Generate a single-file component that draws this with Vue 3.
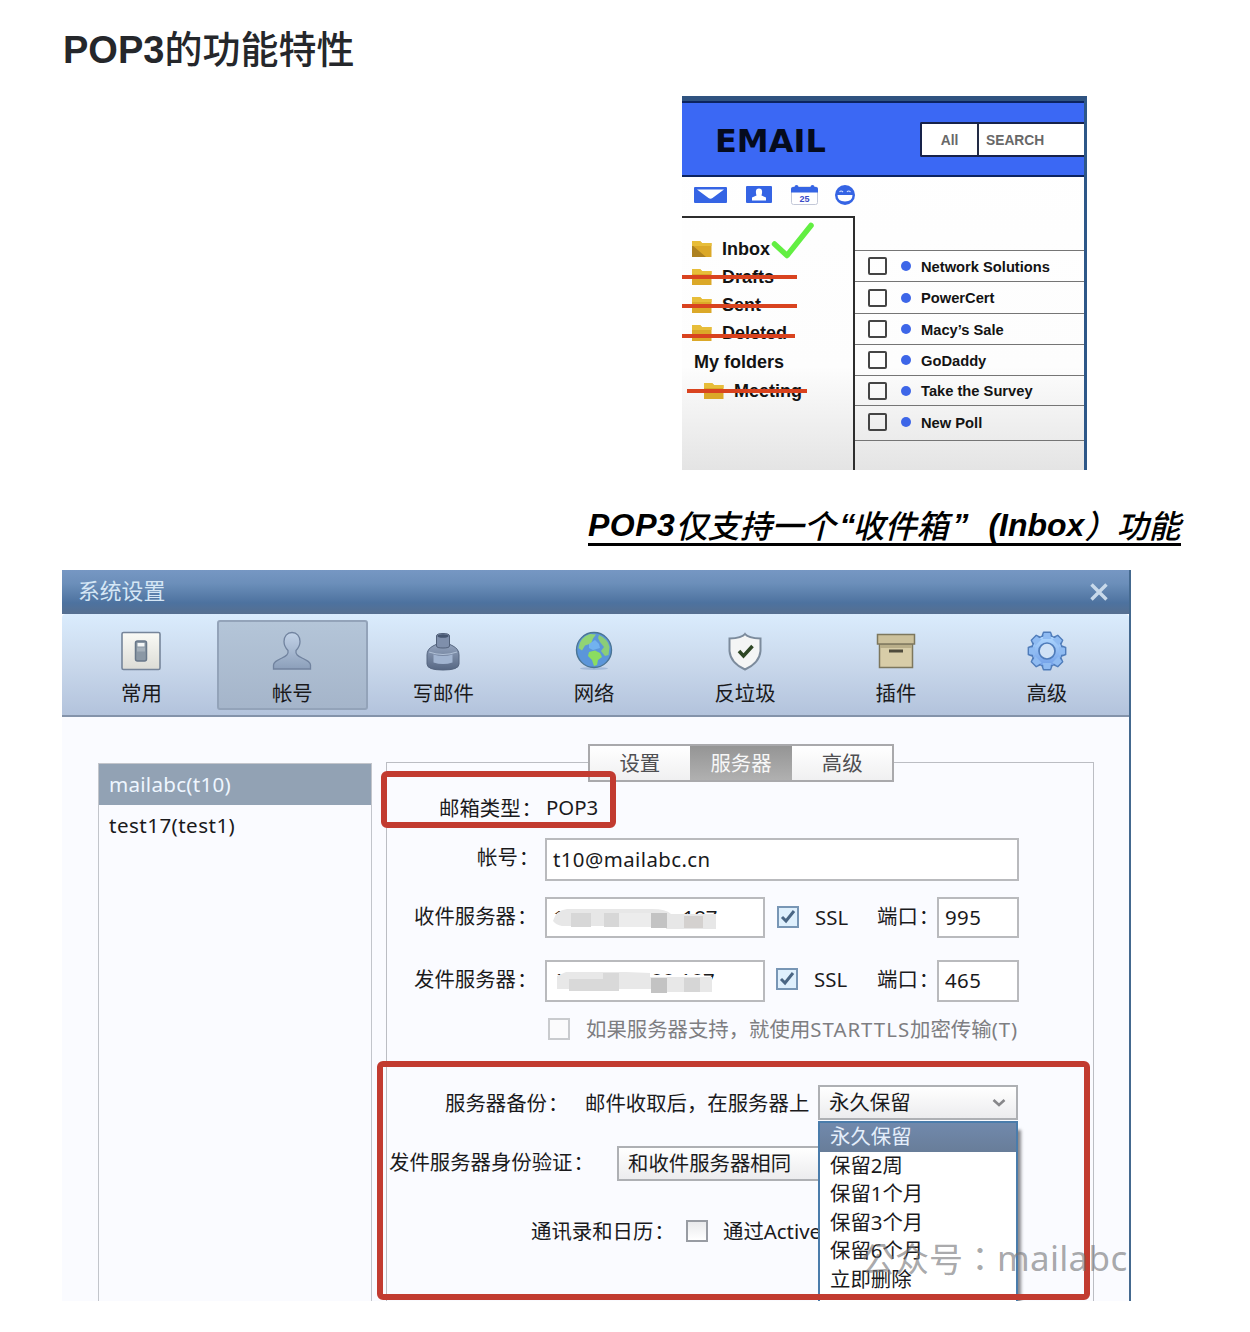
<script setup>
const folders = [
  { name: 'Drafts', strike: 115, dy: 0 },
  { name: 'Sent', strike: 115, dy: 1 },
  { name: 'Deleted', strike: 113, dy: 3 },
]
const mails = [
  { name: 'Network Solutions', h: 31 },
  { name: 'PowerCert', h: 32 },
  { name: 'Macy’s Sale', h: 31 },
  { name: 'GoDaddy', h: 31 },
  { name: 'Take the Survey', h: 30 },
  { name: 'New Poll', h: 35 },
]
const tools = ['常用', '帐号', '写邮件', '网络', '反垃圾', '插件', '高级']
const options = ['永久保留', '保留2周', '保留1个月', '保留3个月', '保留6个月', '立即删除']
const teeth = [0, 45, 90, 135, 180, 225, 270, 315]
</script>

<template>
  <main class="article">
    <h1><b>POP3</b><span>的功能特性</span></h1>

    <section class="mail">
      <div class="mail-head">
        <span class="logo">EMAIL</span>
        <div class="search"><span class="all">All</span><span class="term">SEARCH</span></div>
      </div>
      <div class="mail-icons">
        <svg class="i1" width="33" height="16" viewBox="0 0 33 16"><rect width="33" height="16" rx="1" fill="#3564e4" /><path d="M3 2.500h27L18.500 11q-2 1.500-4 0z" fill="#fff" /></svg>
        <svg class="i2" width="26" height="17" viewBox="0 0 26 17"><rect width="26" height="17" rx="1" fill="#3564e4" /><path d="M6 14.500v-3l4.500-2q-2-7 2.500-7t2.500 7l4.500 2v3z" fill="#fff" /></svg>
        <svg class="i3" width="27" height="20" viewBox="0 0 27 20"><rect x=".5" y="2" width="26" height="17.500" rx="2" fill="#fff" stroke="#c3c8d8" /><path d="M0 7.500V4q0-2 2-2h23q2 0 2 2v3.500z" fill="#3564e4" /><circle cx="5.500" cy="2" r="2" fill="#3564e4" /><circle cx="21.500" cy="2" r="2" fill="#3564e4" /><text x="13.500" y="17" text-anchor="middle" font-size="9" font-weight="700" fill="#3a4bc8">25</text></svg>
        <svg class="i4" width="20" height="20" viewBox="0 0 20 20"><circle cx="10" cy="10" r="10" fill="#3564e4" /><path d="M2.500 10h15q0 6.500-7.500 6.500T2.500 10z" fill="#fff" /><path d="M4.500 7q1.500-2 3.500 0M12 7q1.500-2 3.500 0" fill="none" stroke="#cfdcff" stroke-width="1.200" /></svg>
      </div>
      <div class="mail-body">
        <aside class="side">
          <div class="folder">
            <i class="fold"><svg width="20" height="16" viewBox="0 0 20 16"><path d="M0 0h8l2 2h9.500v14H0z" fill="#dba828" /><path d="M0 4v12h14z" fill="#ad8120" /><path d="M0 0h8l2 2h9.500v3H0z" fill="#e7bd39" /></svg></i>Inbox
            <svg class="tick" width="44" height="38" viewBox="0 0 44 38"><path d="M3.500 22 16 33.500 40 3.500" fill="none" stroke="#62ef42" stroke-width="5.500" stroke-linecap="round" stroke-linejoin="round" /></svg>
          </div>
          <div v-for="f in folders" :key="f.name" class="folder">
            <i class="fold"><svg width="20" height="16" viewBox="0 0 20 16"><path d="M0 0h8l2 2h9.500v14H0z" fill="#dba828" /><path d="M0 0h8l2 2h9.500v3H0z" fill="#e7bd39" /></svg></i>{{ f.name }}
            <span class="strike" :style="{ width: f.strike + 'px', marginTop: f.dy + 'px' }"></span>
          </div>
          <div class="own">My folders</div>
          <div class="folder sub">
            <i class="fold"><svg width="20" height="16" viewBox="0 0 20 16"><path d="M0 0h8l2 2h9.500v14H0z" fill="#dba828" /><path d="M0 0h8l2 2h9.500v3H0z" fill="#e7bd39" /></svg></i>Meeting
            <span class="strike long"></span>
          </div>
        </aside>
        <div class="list">
          <div v-for="m in mails" :key="m.name" class="item" :style="{ height: m.h + 'px' }"><i class="cb"></i><i class="dot"></i><span>{{ m.name }}</span></div>
          <div class="item end"></div>
        </div>
      </div>
    </section>

    <p class="caption"><em class="pop">POP3</em><span class="cj">仅支持一个</span><em class="lq">“</em><span class="cj">收件箱</span><em class="rq">”</em><em class="open">(Inbox</em><span class="cj close">）功能</span></p>

    <section class="dialog">
      <header class="bar"><span>系统设置</span><svg width="18" height="18" viewBox="0 0 18 18"><path d="M1.500 1.500l15 15M16.500 1.500l-15 15" stroke="#c8d9ea" stroke-width="3.400" /></svg></header>
      <nav class="tools">
        <div v-for="(t, i) in tools" :key="t" class="tool" :class="{ on: i === 1 }">
          <svg width="40" height="40" viewBox="0 0 40 40">
            <defs>
              <linearGradient id="paper" x1="0" y1="0" x2="0" y2="1"><stop offset="0" stop-color="#fafaf6" /><stop offset="1" stop-color="#dcdcd6" /></linearGradient>
              <linearGradient id="steel" x1="0" y1="0" x2="0" y2="1"><stop offset="0" stop-color="#c3d3e8" /><stop offset="1" stop-color="#8c9fba" /></linearGradient>
              <linearGradient id="ink" x1="0" y1="0" x2="0" y2="1"><stop offset="0" stop-color="#93a3bd" /><stop offset="1" stop-color="#566783" /></linearGradient>
              <linearGradient id="sky" x1="0" y1="0" x2="0" y2="1"><stop offset="0" stop-color="#b0d8ff" /><stop offset="1" stop-color="#719fe8" /></linearGradient>
            </defs>
            <g v-if="i === 0"><rect x="1" y="1.500" width="38" height="37" rx="1.500" fill="url(#paper)" stroke="#76859a" stroke-width="1.600" /><rect x="14.500" y="10" width="11" height="20" rx="2" fill="#8b98a5" stroke="#687789" stroke-width="1.500" /><rect x="16.500" y="12" width="7" height="3.500" fill="#f4f6f6" /><path d="M16 16.500h8v4h-8z" fill="#a5b0ba" /></g>
            <path v-else-if="i === 1" d="M20 1.500c-5 0-8 4-8 9 0 4 2 7 4 9 .8 4-2 5.500-6 7.500-5 2.500-8.500 4-8.500 7V38h37v-4c0-3-3.500-4.500-8.500-7-4-2-6.800-3.500-6-7.500 2-2 4-5 4-9 0-5-3-9-8-9z" fill="url(#steel)" stroke="#71839f" stroke-width="1.300" />
            <g v-else-if="i === 2"><path d="M4 24q0-6 6-9l3-1.500h14l3 1.500q6 3 6 9v9q0 6-16 6T4 33z" fill="url(#ink)" stroke="#566680" /><path d="M13.500 5q0-2.500 6.500-2.500T26.500 5v10q0 2-6.500 2t-6.500-2z" fill="#7f8fab" stroke="#52617a" /><ellipse cx="20" cy="5" rx="5.500" ry="1.800" fill="#465670" /><path d="M10.500 23.500q9.500 3 19 0v8q-9.500 3-19 0z" fill="#a1b4d0" /><path d="M6 21q14 5 28 0" stroke="#b0c0d6" fill="none" /></g>
            <g v-else-if="i === 3"><ellipse cx="20" cy="37.500" rx="14" ry="1.500" fill="#a3bad9" /><circle cx="20" cy="19" r="17.500" fill="#5b96da" stroke="#4b7595" stroke-width="1.400" /><path d="M4.500 17Q6 6 16 3l6 .5-3 4-2 5-6 2-3 5z" fill="#91d474" /><path d="M25 4q9 4 10.500 12l-1 8-3.500 1-4-5 3-4-4-5-2-4z" fill="#8bcd78" /><path d="m15 21 6-1.500 5 2.500 2 4-4 3-1 5-3 1-2-6-4-4z" fill="#8bdc61" /><path d="m15 13 6-4 4 4 1 4-7 2-4-2z" fill="#72b2ef" /></g>
            <g v-else-if="i === 4"><path d="M20 3q3 4 15.500 4.500V20q-1 12-15.500 18.500Q5.500 32 4.500 20V7.500Q17 7 20 3z" fill="#f4f5f5" stroke="#7c8b9c" stroke-width="2" /><path d="m14 20 4.500 5 9-10" fill="none" stroke="#2e4624" stroke-width="3.500" /></g>
            <g v-else-if="i === 5"><path d="M3.500 13h33v23.500h-33z" fill="#d8cda8" stroke="#7d775d" stroke-width="1.500" /><path d="M4 13.500h32V17H4z" fill="#b9ae89" /><path d="M1.500 3.500h37V13h-37z" fill="#ccc19c" stroke="#7d775d" stroke-width="1.500" /><path d="M13 18.500h14v3H13z" fill="#4f4b3c" /></g>
            <g v-else>
              <g stroke="#4f7cba" stroke-width="1.400" fill="#8bb7f1" stroke-linejoin="round"><path v-for="a in teeth" :key="a" d="M14 8 16.500 1.300h7L26 8z" :transform="`rotate(${a} 20 20)`" /><circle cx="20" cy="20" r="15.200" /></g>
              <circle cx="20" cy="20" r="14.700" fill="url(#sky)" /><path v-for="a in teeth" :key="'f' + a" d="M15.500 8 17.400 2.300h5.200L24.500 8z" fill="#8fbbf2" :transform="`rotate(${a} 20 20)`" />
              <circle cx="20" cy="20" r="8" fill="#d0e2f6" stroke="#4f7cba" stroke-width="1.700" />
            </g>
          </svg>
          <span>{{ t }}</span>
        </div>
      </nav>

      <div class="body">
        <div class="accounts"><div class="acc on">mailabc(t10)</div><div class="acc">test17(test1)</div></div>
        <div class="panel">
          <div class="tabs"><span>设置</span><span class="on">服务器</span><span>高级</span></div>
          <div class="row r1"><label>邮箱类型<span class="cl">：</span></label><span class="val">POP3</span></div>
          <div class="row r2"><label>帐号<span class="cl">：</span></label><span class="field wide">t10@mailabc.cn</span></div>
          <div class="row r3">
            <label>收件服务器<span class="cl">：</span></label>
            <span class="field host"><span>1</span><span class="tail">.187</span>
              <svg class="mask" width="215" height="37" viewBox="0 0 215 37"><path d="M2 15h205v20H2z" fill="#fff" /><path d="M6 22q3-11 14-12h85q14 0 19 5h45v15h-50v-3H15q-6-1-9-5z" fill="#e7e7e7" /><path d="M24 14h20v14H24zM57 14h15v14H57z" fill="#d7d7d7" /><path d="M72 14h32v14H72z" fill="#ececec" /><path d="M104 14h16v15h-16z" fill="#c3c3c3" /><path d="M137 17h19v12h-19z" fill="#d4d1cf" /></svg>
            </span>
            <i class="box checked"><svg width="16" height="16" viewBox="0 0 16 16"><path d="m2 8 4 4 8-10" fill="none" stroke="#4a6684" stroke-width="3" /></svg></i><span class="ssl">SSL</span><label class="port">端口<span class="cl">：</span></label><span class="field num">995</span>
          </div>
          <div class="row r4">
            <label>发件服务器<span class="cl">：</span></label>
            <span class="field host"><span>1</span><span class="tail wider">88.187</span>
              <svg class="mask" width="215" height="37" viewBox="0 0 215 37"><path d="M2 13h155v22H2zM157 17h8v18h-8z" fill="#fff" /><path d="M10 14 19 10h60l24 1v4h62v15h-56l-5-3H10z" fill="#e8e8e8" /><path d="M22 17h50v12H22zM56 11h16v7H56z" fill="#d9d9d9" /><path d="M104 16h16v15h-16z" fill="#c3c3c3" /><path d="M137 16h16v14h-16z" fill="#d6d6d6" /></svg>
            </span>
            <i class="box checked"><svg width="16" height="16" viewBox="0 0 16 16"><path d="m2 8 4 4 8-10" fill="none" stroke="#4a6684" stroke-width="3" /></svg></i><span class="ssl">SSL</span><label class="port">端口<span class="cl">：</span></label><span class="field num">465</span>
          </div>
          <div class="row r5"><i class="box off"></i><span class="hint">如果服务器支持，就使用<span class="lat">STARTTLS</span>加密传输<span class="lat">(T)</span></span></div>
          <div class="row r6">
            <label>服务器备份<span class="cl">：</span></label><span class="after">邮件收取后，在服务器上</span>
            <div class="select keep">永久保留
              <svg width="14" height="10" viewBox="0 0 14 10"><path d="m1.500 2 5.500 5 5.500-5" fill="none" stroke="#87878a" stroke-width="2.600" /></svg>
              <ul class="menu"><li v-for="(o, i) in options" :key="o" :class="{ on: i === 0 }">{{ o }}</li></ul>
            </div>
          </div>
          <div class="row r7"><label>发件服务器身份验证<span class="cl">：</span></label><div class="select auth">和收件服务器相同</div></div>
          <div class="row r8"><label>通讯录和日历<span class="cl">：</span></label><i class="box"></i><span class="act">通过ActiveSync</span></div>
        </div>
      </div>
      <div class="mark m1"></div>
      <div class="mark m2"></div>
      <div class="watermark"><span lang="zh-TW">公众号：</span><span class="wl">mailabc</span></div>
    </section>
  </main>
</template>

<style>
body { margin: 0; background: #fff; }
</style>

<style scoped>
* { box-sizing: border-box; }
i { font-style: normal; }
svg { display: block; flex: none; }
.article { width: 1250px; height: 1332px; padding: 30px 0 0 62px; overflow: hidden; white-space: nowrap; font-family: "Noto Sans", "Noto Sans CJK SC", sans-serif; }
h1 { margin: 0; height: 66px; padding-left: 1px; font: 500 38px/40px "Liberation Sans", "Noto Sans CJK SC", sans-serif; color: #25272b; }
h1 b { font-weight: 700; }

.mail { margin-left: 620px; width: 405px; height: 374px; border-top: 5px solid #2f5380; border-right: 3px solid #2d5788; overflow: hidden; background: linear-gradient(#fff 0, #fdfdfd 72%, #e4e4e4 100%); font-family: "Liberation Sans", sans-serif; font-weight: 700; color: #131313; }
.mail-head { height: 76px; border-top: 2px solid #0c2460; border-bottom: 2px solid #0c2460; background: #3b68f4; display: flex; align-items: center; }
.logo { margin: 3px 0 0 33px; width: 205px; flex: none; font: 700 32px/36px "DejaVu Sans", sans-serif; color: #050b1e; }
.search { display: flex; flex: 1; height: 35px; border: 2px solid #17224a; border-right: 0; border-radius: 2px 0 0 2px; background: #fff; color: #686868; font-size: 13.8px; line-height: 33px; }
.all { width: 57px; text-align: center; border-right: 2px solid #222b45; }
.term { padding-left: 7px; }
.mail-icons { height: 39px; padding-bottom: 4px; display: flex; align-items: center; }
.i1 { margin-left: 12px; } .i2 { margin-left: 19px; } .i3 { margin-left: 19px; overflow: visible; } .i4 { margin-left: 17px; }
.mail-body { display: flex; height: 254px; }
.side { width: 173px; border: solid #2d2d2d; border-width: 2px 2px 0 0; padding-top: 17px; font-size: 18px; }
.folder { position: relative; height: 28px; display: flex; align-items: center; padding-left: 10px; }
.fold { width: 30px; flex: none; }
.tick { position: absolute; left: 89px; top: -13px; }
.strike { position: absolute; left: 0; top: 12px; height: 4px; background: #d9431f; }
.own { height: 30px; line-height: 31px; padding-left: 12px; }
.sub { padding-left: 22px; }
.long { left: 5px; width: 120px; }
.list { flex: 1; padding-top: 34px; font-size: 14.7px; }
.item { border-top: 1.5px solid #757575; display: flex; align-items: center; }
.item:nth-child(6) { padding-bottom: 2px; }
.cb { width: 19px; height: 18px; margin-left: 13px; border: 2px solid #444; border-radius: 2px; }
.dot { width: 10px; height: 10px; border-radius: 50%; margin: 0 10px 0 14px; background: #3d66e8; }
.item span { padding-top: 1px; }

.caption { display: flex; margin: 35px 0 0 526px; width: 593px; height: 41px; border-bottom: 3px solid #000; font: 500 32px/39px "Noto Sans CJK SC", sans-serif; color: #000; font-style: italic; }
.caption em { font-family: "Liberation Sans", sans-serif; font-weight: 700; line-height: 41px; }
.caption .pop { letter-spacing: .5px; }
.caption .lq { margin: 0 -3px 0 4px; }
.caption .rq { margin-left: 4px; }
.caption .open { margin-left: 20px; }

.dialog { position: relative; margin-top: 24px; width: 1069px; height: 731px; overflow: hidden; background: #fafbff; color: #1a1a1c; font-size: 20.4px; border-right: 2px solid #44698f; }
.bar { height: 44px; padding: 0 23px 0 16px; width: 1069px; display: flex; align-items: center; justify-content: space-between; background: linear-gradient(#7697c3 0, #6c8fba 30%, #4d729f 75%, #566f90 100%); color: #d5e6f5; font-size: 21.8px; }
.bar span { padding-bottom: 5px; }
.tools { height: 103px; display: flex; padding: 6px 0 0 4px; background: linear-gradient(#daecfd, #cbdaed 45%, #b3c3dc); border-bottom: 2px solid #8493aa; border-radius: 4px 4px 0 0; }
.tool { width: 150.9px; flex: none; height: 90px; display: flex; flex-direction: column; align-items: center; padding-top: 11px; border: 2px solid transparent; border-radius: 3px; line-height: 28px; }
.tool span { margin-top: 6px; }
.tool svg { transform: translateY(-2px); }
.tool.on { background: linear-gradient(#b4c5d8, #a5b5ca); border-color: #93a3b9; }
.body { display: flex; height: 584px; }
.accounts { margin: 46px 0 0 36px; width: 274px; height: 560px; border: 1px solid #c2c5cb; }
.acc { height: 41px; line-height: 41px; padding-left: 10px; font-size: 20.6px; letter-spacing: .45px; }
.acc.on { background: #92a2b4; color: #eef6ff; letter-spacing: .25px; }
.panel { margin: 45px 0 0 14px; width: 708px; height: 560px; border: 1.5px solid #bbbdc3; padding: 1px 0 0 1px; }
.tabs { display: flex; margin: -20px 0 0 200px; width: 306px; height: 38px; border: 2px solid #a9a9ac; background: linear-gradient(#fff, #f0f0f1); color: #4f4f52; line-height: 34px; text-align: center; }
.tabs span { width: 100px; }
.tabs .on { width: 103px; background: linear-gradient(#959595, #b0b0b0); color: #f7f7f7; }
.row { display: flex; align-items: center; }
.r1 { margin-top: 10px; height: 32px; padding: 0 0 3px 51px; }
.r2 { margin-top: 14px; height: 43px; padding-left: 89px; }
.r3 { margin-top: 16px; height: 41px; padding-left: 26px; }
.r4 { margin-top: 22px; height: 42px; padding-left: 26px; }
.r5 { margin-top: 15px; height: 24px; padding-left: 160px; color: #7e7e82; }
.r6 { margin-top: 44px; height: 35px; padding-left: 57px; }
.r7 { margin-top: 26px; height: 35px; padding-left: 1px; }
.r8 { margin-top: 38px; height: 24px; padding-left: 143px; }
label { flex: none; }
.cl { margin-left: 1px; }
.r1 label { width: 107px; } .r2 label { width: 68px; } .r3 label, .r4 label { width: 131px; } .r6 label { width: 140px; } .r7 label { width: 228px; padding-bottom: 6px; } .r8 label { width: 155px; padding-bottom: 2px; }
.r2 label { padding-bottom: 8px; } .r3 label, .r4 label { padding-bottom: 6px; }
.field { position: relative; display: flex; align-items: center; height: 100%; border: 2px solid #b9babd; background: #fff; padding: 0 0 2px 6px; flex: none; }
.wide { width: 474px; letter-spacing: .42px; }
.host { width: 220px; }
.tail { position: absolute; left: 130px; }
.tail.wider { left: 104px; }
.mask { position: absolute; left: 0; top: 0; }
.num { width: 82px; letter-spacing: .4px; }
.box { width: 22px; height: 22px; flex: none; border: 2px solid #989ca3; background: linear-gradient(#e9eaec, #fff); display: flex; align-items: center; justify-content: center; }
.box.checked { margin-left: 12px; border-color: #7896b5; background: #dff0fd; }
.r3 .checked { margin-bottom: 2px; }
.r4 .checked { margin: 0 0 4px 11px; }
.box.off { border-color: #c9cbce; background: #fbfbfc; }
.ssl { margin-left: 16px; width: 62px; padding-bottom: 1px; }
.r4 .ssl { width: 63px; padding-bottom: 4px; }
.r3 .port, .r4 .port { width: 60px; }
.hint { margin-left: 16px; padding-bottom: 2px; }
.lat { letter-spacing: 1px; }
.select { position: relative; height: 35px; border: 2px solid #aeb0b4; background: linear-gradient(#fff, #ececee); padding-left: 9px; line-height: 31px; flex: none; }
.keep { margin-left: 8px; width: 200px; }
.keep > svg { position: absolute; right: 10px; top: 11px; }
.r6 label, .after { padding-bottom: 2px; }
.after { width: 225px; }
.auth { width: 300px; }
.menu { position: absolute; z-index: 2; left: -2px; top: 34px; width: 200px; height: 190px; margin: 0; padding: 0; list-style: none; background: #fff; border: 2px solid #4a7cab; border-bottom: 0; box-shadow: 4px 8px 3px -1px rgba(60, 60, 65, .6); }
.menu li { height: 28.6px; line-height: 27px; padding-left: 10px; }
.menu .on { background: linear-gradient(#7189ac, #687d99); color: #e4eefb; }
.act { margin-left: 15px; padding-bottom: 2px; }
.mark { position: absolute; z-index: 3; border: 6px solid #c23b30; border-radius: 6px; }
.m1 { left: 319px; top: 201px; width: 235px; height: 57px; }
.m2 { left: 315px; top: 491px; width: 713px; height: 239px; }
.watermark { position: absolute; z-index: 4; left: 799px; top: 664px; display: flex; font-size: 34px; line-height: 48px; color: rgba(120, 120, 123, .65); }
.watermark span:first-child { font-family: "Noto Sans CJK TC", sans-serif; }
.wl { font-size: 35px; letter-spacing: .3px; }
</style>
